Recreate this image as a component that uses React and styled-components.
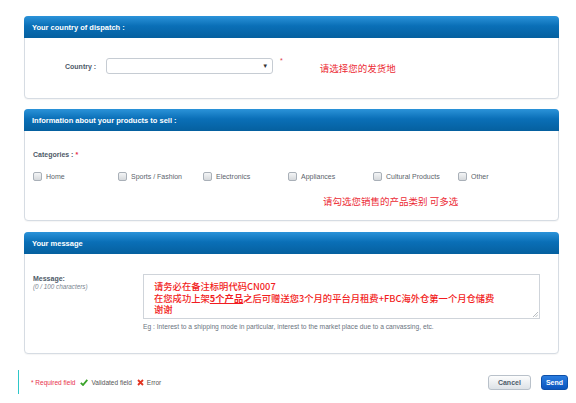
import React from "react";
import styled, { createGlobalStyle } from "styled-components";

const GlobalStyle = createGlobalStyle`
  html, body {
    margin: 0;
    padding: 0;
    background: #ffffff;
  }
  body {
    font-family: "Liberation Sans", Arial, "Noto Sans CJK SC", sans-serif;
  }
`;

const Page = styled.div`
  width: 576px;
  height: 403px;
  box-sizing: border-box;
  padding: 16px 17px 0 24px;
  display: flex;
  flex-direction: column;
`;

const Panel = styled.section`
  border: 1px solid #d6dce3;
  border-radius: 4px;
  background: #fff;
  margin-bottom: ${({ $gap }) => $gap}px;
  box-shadow: 0 1px 1px rgba(0, 0, 0, 0.04);
`;

const PanelHead = styled.h2`
  margin: -1px -1px 0;
  height: 22px;
  box-sizing: border-box;
  padding: 0 8px;
  display: flex;
  align-items: center;
  border-radius: 4px 4px 0 0;
  background: linear-gradient(#2b93d9 0%, #0a6fb7 45%, #05609f 100%);
  color: #fff;
  font-size: 7.5px;
  font-weight: bold;
`;

const PanelBody = styled.div`
  height: ${({ $h }) => $h}px;
  box-sizing: border-box;
  padding: ${({ $pad }) => $pad};
  font-size: 7px;
  line-height: 9px;
`;

const CountryRow = styled.div`
  display: flex;
  align-items: center;
`;

const FieldLabel = styled.div`
  color: #4e5a68;
  font-size: 7px;
  line-height: 9px;
  font-weight: bold;
`;

const Select = styled.div`
  margin-left: 10px;
  width: 167px;
  height: 16px;
  box-sizing: border-box;
  border: 1px solid #c6ccd3;
  border-radius: 3px;
  background: #fff;
  display: flex;
  align-items: center;
  justify-content: flex-end;
  padding-right: 4px;
  font-size: 6px;
  color: #333;
`;

const Star = styled.span`
  color: #e03b4a;
  font-size: 7px;
  align-self: flex-start;
  margin: -2px 0 0 ${({ $ml }) => $ml}px;
`;

const RedNote = styled.span`
  color: #ec2b35;
  font-size: 9.5px;
  line-height: 12px;
  font-family: "Noto Sans CJK SC", sans-serif;
  margin-left: ${({ $ml }) => $ml}px;
  margin-top: ${({ $mt }) => $mt || 0}px;
  display: inline-block;
`;

const CheckRow = styled.div`
  display: grid;
  grid-template-columns: repeat(6, 85px);
  margin-top: 13px;
`;

const CheckItem = styled.div`
  display: flex;
  align-items: center;
  gap: 4px;
  font-size: 7px;
  color: #5b636c;
`;

const Box = styled.span`
  width: 7px;
  height: 7px;
  border: 1px solid #a9b0b8;
  border-radius: 2px;
  background: linear-gradient(#f4f5f6, #d6d9dc);
`;

const MessageRow = styled.div`
  display: grid;
  grid-template-columns: 110px 397px;
`;

const SubNote = styled.div`
  font-size: 6.3px;
  line-height: 7px;
  font-style: italic;
  color: #7a8490;
`;

const TextArea = styled.div`
  position: relative;
  height: 45px;
  box-sizing: border-box;
  border: 1px solid #cfd4da;
  padding: 6px 10px 0;
  color: #f21c22;
  font-family: "Noto Sans CJK SC", sans-serif;
  font-weight: 500;
  font-size: 9.3px;
  line-height: 11.7px;
  white-space: nowrap;

  b {
    font-weight: bold;
    text-decoration: underline;
  }
`;

const Grip = styled.svg`
  position: absolute;
  right: 1px;
  bottom: 1px;
`;

const Hint = styled.div`
  grid-column: 2;
  font-size: 6.7px;
  color: #6a7480;
  margin-top: 3px;
  white-space: nowrap;
`;

const Footer = styled.div`
  margin: 16px 0 0 -6px;
  height: 24px;
  display: flex;
  align-items: center;
  border-left: 1px solid #2ec7c9;
  padding-left: 12px;
`;

const Legend = styled.div`
  display: flex;
  align-items: center;
  gap: 5px;
  font-size: 6.5px;
  color: #555;
`;

const Req = styled.span`
  color: #e8324a;
`;

const LegendItem = styled.span`
  display: flex;
  align-items: center;
  gap: 3px;
`;

const Buttons = styled.div`
  margin-left: auto;
  margin-right: -9px;
  display: flex;
  gap: 10px;
`;

const Button = styled.button`
  height: 15px;
  padding: 0 ${({ $primary }) => ($primary ? 4 : 9)}px;
  border-radius: 3px;
  font-family: "Liberation Sans", Arial, sans-serif;
  font-size: 7px;
  font-weight: bold;
  border: 1px solid ${({ $primary }) => ($primary ? "#0d4fa8" : "#b9c1ca")};
  color: ${({ $primary }) => ($primary ? "#fff" : "#4d5b6a")};
  background: ${({ $primary }) =>
    $primary
      ? "linear-gradient(#2a7de0, #0b55bd)"
      : "linear-gradient(#fdfdfd, #dde2e7)"};
`;

const categories = [
  "Home",
  "Sports / Fashion",
  "Electronics",
  "Appliances",
  "Cultural Products",
  "Other",
];

export default function App() {
  return (
    <>
      <GlobalStyle />
      <Page>
        <Panel $gap={10}>
          <PanelHead>Your country of dispatch :</PanelHead>
          <PanelBody $h={60} $pad="20px 0 0 40px">
            <CountryRow>
              <FieldLabel>Country :</FieldLabel>
              <Select>▼</Select>
              <Star $ml={7}>*</Star>
              <RedNote $ml={37} $mt={3}>请选择您的发货地</RedNote>
            </CountryRow>
          </PanelBody>
        </Panel>

        <Panel $gap={11}>
          <PanelHead>Information about your products to sell :</PanelHead>
          <PanelBody $h={89} $pad="19px 0 0 8px">
            <FieldLabel>
              Categories : <Req>*</Req>
            </FieldLabel>
            <CheckRow>
              {categories.map((c) => (
                <CheckItem key={c}>
                  <Box />
                  {c}
                </CheckItem>
              ))}
            </CheckRow>
            <RedNote $ml={290} $mt={14}>
              请勾选您销售的产品类别 可多选
            </RedNote>
          </PanelBody>
        </Panel>

        <Panel $gap={0}>
          <PanelHead>Your message</PanelHead>
          <PanelBody $h={99} $pad="20px 0 0 8px">
            <MessageRow>
              <div>
                <FieldLabel>Message:</FieldLabel>
                <SubNote>(0 / 100 characters)</SubNote>
              </div>
              <TextArea>
                请务必在备注标明代码CN007
                <br />
                在您成功上架<b>5个产品</b>之后可赠送您3个月的平台月租费+FBC海外仓第一个月仓储费
                <br />
                谢谢
                <Grip width="6" height="6" viewBox="0 0 6 6">
                  <path d="M1 6 L6 1 M3.5 6 L6 3.5" stroke="#9aa0a6" strokeWidth="0.7" />
                </Grip>
              </TextArea>
              <Hint>
                Eg : Interest to a shipping mode in particular, interest to the
                market place due to a canvassing, etc.
              </Hint>
            </MessageRow>
          </PanelBody>
        </Panel>

        <Footer>
          <Legend>
            <Req>* Required field</Req>
            <LegendItem>
              <svg width="8" height="7" viewBox="0 0 8 7">
                <path d="M0.8 3.8 L3 6 L7.3 0.9" fill="none" stroke="#3aa32a" strokeWidth="1.8" />
              </svg>
              Validated field
            </LegendItem>
            <LegendItem>
              <svg width="7" height="7" viewBox="0 0 7 7">
                <path d="M1 1 L6 6 M6 1 L1 6" stroke="#e2331f" strokeWidth="1.8" />
              </svg>
              Error
            </LegendItem>
          </Legend>
          <Buttons>
            <Button>Cancel</Button>
            <Button $primary>Send</Button>
          </Buttons>
        </Footer>
      </Page>
    </>
  );
}
